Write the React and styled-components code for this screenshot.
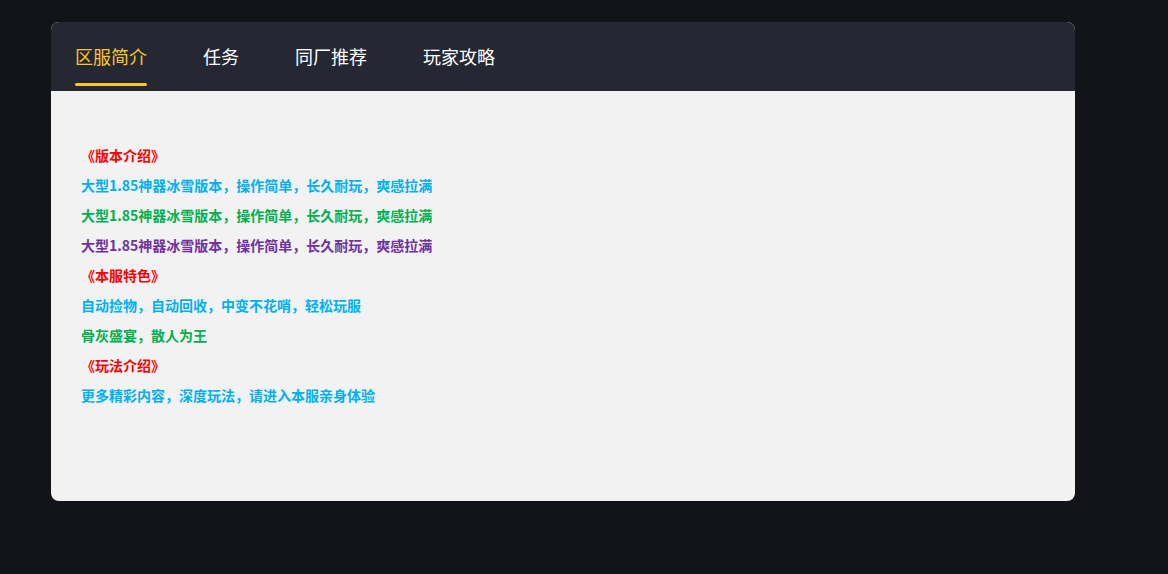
import React, { useState } from 'react';
import styled, { createGlobalStyle } from 'styled-components';

const GlobalStyle = createGlobalStyle`
  html, body {
    margin: 0;
    padding: 0;
    background: #131419;
    font-family: "Microsoft YaHei", "Noto Sans CJK SC", "Noto Sans", sans-serif;
  }
`;

const Page = styled.div`
  min-height: 574px;
  padding: 22px 0 0 51px;
  box-sizing: border-box;
`;

const Card = styled.div`
  width: 1024px;
  border-radius: 8px;
  overflow: hidden;
  background: #f2f2f2;
`;

const TabBar = styled.div`
  display: flex;
  gap: 56px;
  height: 69px;
  padding: 0 24px;
  background: #252733;
`;

const Tab = styled.div`
  position: relative;
  display: flex;
  align-items: center;
  padding-bottom: 1px;
  font-size: 18px;
  color: ${(p) => (p.$active ? '#fbc52d' : '#ffffff')};
  cursor: pointer;

  &::after {
    content: '';
    display: ${(p) => (p.$active ? 'block' : 'none')};
    position: absolute;
    left: 0;
    right: 0;
    bottom: 5px;
    height: 3px;
    border-radius: 2px;
    background: #fbc52d;
  }
`;

const Content = styled.div`
  padding: 49px 30px 91px;
`;

const Line = styled.p`
  margin: 0;
  font-size: 14px;
  font-weight: bold;
  line-height: 30px;
  color: ${(p) => p.$color};
`;

const colors = {
  red: '#ff0000',
  blue: '#00b0f0',
  green: '#00b050',
  purple: '#7030a0',
};

const tabs = ['区服简介', '任务', '同厂推荐', '玩家攻略'];

const lines = [
  ['red', '《版本介绍》'],
  ['blue', '大型1.85神器冰雪版本，操作简单，长久耐玩，爽感拉满'],
  ['green', '大型1.85神器冰雪版本，操作简单，长久耐玩，爽感拉满'],
  ['purple', '大型1.85神器冰雪版本，操作简单，长久耐玩，爽感拉满'],
  ['red', '《本服特色》'],
  ['blue', '自动捡物，自动回收，中变不花哨，轻松玩服'],
  ['green', '骨灰盛宴，散人为王'],
  ['red', '《玩法介绍》'],
  ['blue', '更多精彩内容，深度玩法，请进入本服亲身体验'],
];

const App = () => {
  const [active, setActive] = useState(0);

  return (
    <Page>
      <GlobalStyle />
      <Card>
        <TabBar>
          {tabs.map((t, i) => (
            <Tab key={t} $active={i === active} onClick={() => setActive(i)}>
              {t}
            </Tab>
          ))}
        </TabBar>
        <Content>
          {lines.map(([c, text], i) => (
            <Line key={i} $color={colors[c]}>
              {text}
            </Line>
          ))}
        </Content>
      </Card>
    </Page>
  );
};

export default App;
